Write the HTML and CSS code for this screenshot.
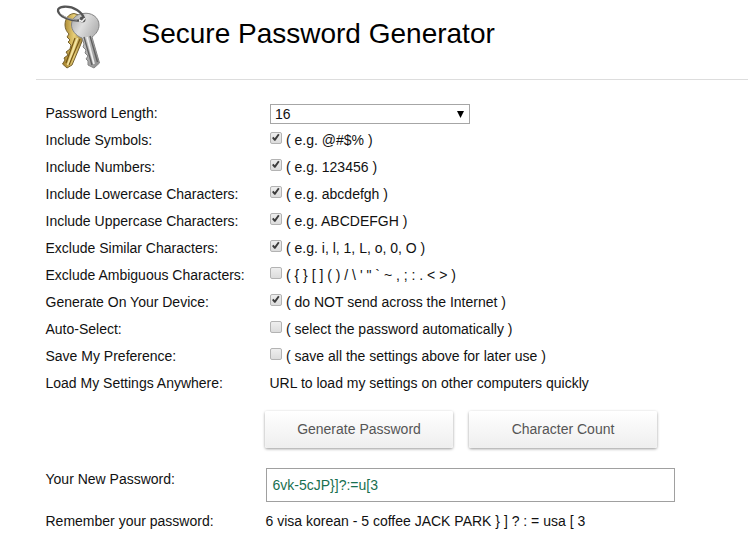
FILE: index.html
```html
<!DOCTYPE html>
<html lang="en">
<head>
<meta charset="utf-8">
<title>Secure Password Generator</title>
<link rel="stylesheet" href="styles.css">
</head>
<body>
<svg width="0" height="0" class="defs">
  <symbol id="tick" viewBox="0 0 12 12"><path d="M1.2 6 3 4.5 4.5 6.2 8.5.9 10.3 2.2 5.3 9.3 3.9 9.3Z" fill="#3c3c3c"/></symbol>
</svg>
<header class="header">
  <svg class="keys" width="52" height="72" viewBox="0 0 52 72">
    <defs>
      <linearGradient id="silver" x1="0" y1="0" x2="1" y2="1"><stop offset="0" stop-color="#a5a5a5"/><stop offset=".3" stop-color="#dedede"/><stop offset=".55" stop-color="#bcbcbc"/><stop offset="1" stop-color="#8b8b8b"/></linearGradient>
      <linearGradient id="gold" x1="0" y1="0" x2="1" y2="0"><stop offset="0" stop-color="#a07b24"/><stop offset=".5" stop-color="#e8cf78"/><stop offset="1" stop-color="#806020"/></linearGradient>
    </defs>
    <path d="M20 13.500C14 14 11 19 11 25C11 29 13 32 15 34L13 37 16 40 14 42 17 45 16 49 12 52 14 55 10 58 11 60 8.500 64 13 68 18 65 29 39 32 17Z" fill="url(#gold)" stroke="#77622f"/>
    <path d="M26 39 15 65M21 38 12 63" fill="none" stroke="#765817" stroke-width="1.2"/>
    <path d="M23.500 38 13.500 65" stroke="#f4e5a5" stroke-width="1.6"/>
    <path d="M29 13.500C37 12 45 17 45 25C45 30 42 34 38 37L45.500 63 40 68 34 65 34 61 32 59 34 56 31 53 32 50 29 47 30 44 28 38C22 36 17 30 17.500 24C18 18 23 14 29 13.500Z" fill="url(#silver)" stroke="#858585"/>
    <path d="M30 37 38 65M36 36 43.500 62" fill="none" stroke="#606060" stroke-width="1.4"/>
    <path d="M33 37 40 64" stroke="#eee" stroke-width="1.7"/>
    <circle cx="28.500" cy="19.500" r="3" fill="#555"/>
    <path d="M25 20 28 21.500 31 18" fill="none" stroke="#eee" stroke-width="1.6"/>
    <path d="M25 20.500C15 21 5 16 4 11C3 6 15 5 23 10C26 12 29 15 30 18" fill="none" stroke="#555" stroke-width="2.300"/>
    <path d="M6 13C9 17 17 19.500 23 20" fill="none" stroke="#b5b5b5" stroke-width=".8"/>
  </svg>
  <h1>Secure Password Generator</h1>
</header>
<main class="form">
  <div class="row"><div class="label">Password Length:</div><div class="select"><span>16</span><svg width="7" height="7"><path d="M0 0H7L3.5 7Z"/></svg></div></div>
  <div class="row"><div class="label">Include Symbols:</div><svg class="box" width="12" height="12"><use href="#tick"/></svg><span>( e.g. @#$% )</span></div>
  <div class="row"><div class="label">Include Numbers:</div><svg class="box" width="12" height="12"><use href="#tick"/></svg><span>( e.g. 123456 )</span></div>
  <div class="row"><div class="label">Include Lowercase Characters:</div><svg class="box" width="12" height="12"><use href="#tick"/></svg><span>( e.g. abcdefgh )</span></div>
  <div class="row"><div class="label">Include Uppercase Characters:</div><svg class="box" width="12" height="12"><use href="#tick"/></svg><span>( e.g. ABCDEFGH )</span></div>
  <div class="row"><div class="label">Exclude Similar Characters:</div><svg class="box" width="12" height="12"><use href="#tick"/></svg><span>( e.g. i, l, 1, L, o, 0, O )</span></div>
  <div class="row"><div class="label">Exclude Ambiguous Characters:</div><svg class="box" width="12" height="12"></svg><span>( { } [ ] ( ) / \ ' " ` ~ , ; : . &lt; &gt; )</span></div>
  <div class="row"><div class="label">Generate On Your Device:</div><svg class="box" width="12" height="12"><use href="#tick"/></svg><span>( do NOT send across the Internet )</span></div>
  <div class="row"><div class="label">Auto-Select:</div><svg class="box" width="12" height="12"></svg><span>( select the password automatically )</span></div>
  <div class="row"><div class="label">Save My Preference:</div><svg class="box" width="12" height="12"></svg><span>( save all the settings above for later use )</span></div>
  <div class="row"><div class="label">Load My Settings Anywhere:</div><span>URL to load my settings on other computers quickly</span></div>
  <div class="actions"><button>Generate Password</button><button>Character Count</button></div>
  <div class="result"><div class="label">Your New Password:</div><div class="password">6vk-5cJP}]?:=u[3</div></div>
  <div class="row remember"><div class="label">Remember your password:</div><span>6 visa korean - 5 coffee JACK PARK } ] ? : = usa [ 3</span></div>
</main>
</body>
</html>
```

FILE: styles.css
```css
* { box-sizing: border-box; }
body { margin: 0; height: 535px; overflow: hidden; background: #fff; color: #111; font: 14px/27px "Liberation Sans", Arial, sans-serif; }
.defs { display: block; height: 0; }
.header { display: flex; height: 80px; margin-left: 36px; border-bottom: 1px solid #ddd; }
.keys { margin-left: 18px; flex: none; }
h1 { margin: 18px 0 0 35.5px; font-size: 28px; line-height: 32px; font-weight: 400; color: #000; white-space: nowrap; }
.form { padding: 20px 0 0 45.5px; }
.row { display: flex; height: 27px; white-space: nowrap; }
.label { width: 224px; flex: none; }
.select { display: flex; align-items: center; justify-content: space-between; width: 200px; height: 20px; margin: 4px 0 0 .5px; padding: 0 5px 0 4px; border: 1px solid #a6a6a6; line-height: 18px; }
.box { margin: 5px 4px 0 .5px; flex: none; border: 1px solid #b3b3b3; border-radius: 2px; background: linear-gradient(#eee, #dcdcdc); overflow: visible; }
.actions { display: flex; gap: 16px; padding: 14px 0 0 219.5px; }
button { width: 188px; height: 37px; padding: 0 0 2px; border: 0; border-radius: 2px; background: linear-gradient(#fff, #eee); box-shadow: 0 1px 3px rgba(0,0,0,.4), inset 0 0 1px #fff; color: #555; font: 14px "Liberation Sans", Arial, sans-serif; }
.result { display: flex; margin-top: 20px; line-height: 22px; }
.result .label { width: 220.5px; }
.remember .label { width: 220px; }
.password { width: 409px; height: 34px; padding: 0 5.5px; border: 1px solid #a0a0a0; line-height: 32px; color: #187050; }
.remember { margin-top: 6px; }
```
